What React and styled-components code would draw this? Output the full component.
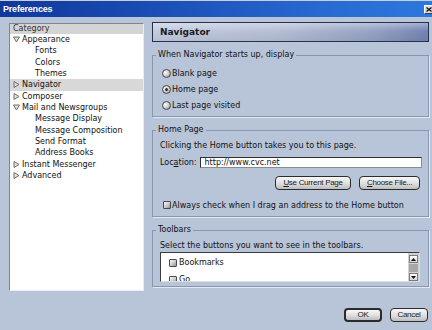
import React from "react";
import styled, { createGlobalStyle } from "styled-components";

const Global = createGlobalStyle`
  html, body { margin: 0; padding: 0; background: #b8c4d8; }
  body { font-family: "DejaVu Sans", Verdana, sans-serif; }
  * { box-sizing: border-box; }
`;

const Window = styled.div`
  width: 432px;
  height: 330px;
  background: #b8c4d8;
  display: flex;
  flex-direction: column;
  overflow: hidden;
  font-family: "DejaVu Sans", Verdana, sans-serif;
  font-size: 8px;
  color: #111;
`;

const TitleBar = styled.div`
  height: 17px;
  flex: none;
  border-top: 1px solid #c9cfdb;
  background: linear-gradient(to right, #10389a 0%, #1a4db5 35%, #276ad2 75%, #2c78de 100%);
  display: flex;
  align-items: center;
  justify-content: space-between;
  padding-left: 3px;
`;

const Title = styled.span`
  font-family: "Liberation Sans", Arial, sans-serif;
  font-weight: bold;
  font-size: 9px;
  letter-spacing: -0.2px;
  color: #fff;
`;

const CloseBox = styled.span`
  width: 10px;
  height: 9px;
  margin-right: -2px;
  background: #d8d8d8;
  border: 1px solid;
  border-color: #fff #404040 #404040 #fff;
  display: flex;
  align-items: center;
  justify-content: center;
`;

const Body = styled.div`
  flex: none;
  display: flex;
  gap: 8px;
  padding: 5px 3px 0 9px;
`;

const TreePanel = styled.div`
  width: 135px;
  height: 268px;
  flex: none;
  margin-top: 1px;
  background: #fff;
  border: 1px solid;
  border-color: #7d8597 #e9edf3 #e9edf3 #7d8597;
  overflow: hidden;
`;

const TreeHead = styled.div`
  height: 10px;
  line-height: 10px;
  background: #d4d4d4;
  color: #333;
  padding-left: 3px;
`;

const TreeRow = styled.div`
  height: 11.33px;
  display: flex;
  align-items: center;
  padding-left: ${(p) => (p.$depth ? 25 : 3)}px;
  background: ${(p) => (p.$selected ? "#d8d8d8" : "transparent")};
  white-space: nowrap;
  color: #111;
`;

const TwistyIcon = styled.svg`
  flex: none;
  margin-right: 2px;
  fill: #e2e2e2;
  stroke: #6e6e6e;
  stroke-width: 1;
`;

const Main = styled.div`
  width: 277px;
  flex: none;
  display: flex;
  flex-direction: column;
`;

const PanelHeader = styled.div`
  height: 20px;
  border: 1px solid #27304c;
  background: linear-gradient(to bottom, rgba(255, 255, 255, 0.35), rgba(255, 255, 255, 0) 45%, rgba(0, 0, 0, 0.06)),
    linear-gradient(to right, #c3cbde 0%, #b5bfd5 45%, #95a2c3 80%, #7384b2 100%);
  display: flex;
  align-items: center;
  padding-left: 7px;
  font-weight: bold;
  font-size: 9px;
  color: #1a1a1a;
`;

const Group = styled.fieldset`
  margin: 8px 0 0;
  padding: ${(p) => p.$pt}px 6px ${(p) => p.$pb}px 7px;
  border: 1px solid #8a96ad;
  box-shadow: 1px 1px 0 #e3e9f2;
  min-inline-size: 0;
`;

const Legend = styled.legend`
  padding: 0 2px;
  margin-left: -4px;
  line-height: 10px;
  font-size: 8px;
  color: #111;
`;

const OptionRow = styled.div`
  display: flex;
  align-items: center;
  height: ${(p) => p.$h}px;
  margin-top: ${(p) => p.$mt || 0}px;
  padding-left: ${(p) => p.$indent}px;
  gap: ${(p) => p.$gap}px;
  white-space: nowrap;
`;

const Radio = styled.span`
  width: 9px;
  height: 9px;
  flex: none;
  border-radius: 50%;
  border: 1px solid #4a4a4a;
  background: radial-gradient(circle at 35% 35%, #fff 0%, #d2d2d2 45%, #8a8a8a 100%);
  display: flex;
  align-items: center;
  justify-content: center;
  &::after {
    content: "";
    width: 3px;
    height: 3px;
    border-radius: 50%;
    background: #2e2e2e;
    display: ${(p) => (p.$checked ? "block" : "none")};
  }
`;

const Check = styled.span`
  width: 8px;
  height: 8px;
  flex: none;
  border: 1px solid #4a4a4a;
  border-radius: 1px;
  background: linear-gradient(135deg, #fbfbfb, #c4c4c4 60%, #8f8f8f);
`;

const Line = styled.div`
  height: 10px;
  line-height: 10px;
  white-space: nowrap;
`;

const LocationRow = styled.div`
  display: flex;
  align-items: center;
  height: 11px;
  margin-top: 6px;
  gap: 3px;
`;

const Label = styled.span`
  white-space: nowrap;
  u {
    text-decoration: underline;
  }
`;

const TextInput = styled.input`
  flex: 1;
  min-width: 0;
  height: 11px;
  border: 1px solid;
  border-color: #303030 #8c8c8c #8c8c8c #303030;
  background: #fff;
  font-family: "DejaVu Sans", Verdana, sans-serif;
  font-size: 8px;
  line-height: 9px;
  padding: 0 4px;
  color: #111;
  outline: none;
`;

const ButtonRow = styled.div`
  display: flex;
  justify-content: flex-end;
  gap: 8px;
  margin-top: 8px;
  padding-right: 2px;
`;

const Button = styled.button`
  height: 14px;
  width: ${(p) => p.$w}px;
  padding: 0;
  border: ${(p) => (p.$default ? 2 : 1)}px solid #2b2b2b;
  border-radius: 4px;
  background: linear-gradient(#f8f8f8, #dedede 55%, #bdbdbd);
  font-family: "Liberation Sans", Arial, sans-serif;
  font-size: 8px;
  letter-spacing: -0.3px;
  color: #1a1a1a;
  line-height: 1;
  display: flex;
  align-items: center;
  justify-content: center;
`;

const ListBox = styled.div`
  height: 30px;
  margin: 1px 2px 0 0;
  border: 1px solid;
  border-color: #3c3c3c #d9dee6 #d9dee6 #3c3c3c;
  background: #fff;
  display: flex;
  overflow: hidden;
`;

const ListItems = styled.div`
  flex: 1;
  padding-top: 1px;
  overflow: hidden;
`;

const ListItem = styled.div`
  height: 17px;
  display: flex;
  align-items: center;
  padding-left: 8px;
  gap: 2px;
`;

const ScrollBar = styled.div`
  width: 11px;
  flex: none;
  display: flex;
  flex-direction: column;
  background: #d0d0d0;
  padding: 2px 1px 0;
`;

const ScrollBtn = styled.div`
  height: 8px;
  flex: none;
  display: flex;
  align-items: center;
  justify-content: center;
  background: linear-gradient(#ffffff, #d6d6d6);
  border: 1px solid #7a7a7a;
`;

const Thumb = styled.div`
  flex: 1;
  background: #a8a8a8;
  margin: 1px 0;
`;

const Footer = styled.div`
  margin-top: auto;
  display: flex;
  justify-content: flex-end;
  gap: 8px;
  padding: 0 4px 8px 0;
`;

const Twisty = ({ open }) => (
  <TwistyIcon width="7" height="7" viewBox="0 0 7 7">
    {open ? <polygon points="0.5,1 6.5,1 3.5,6" /> : <polygon points="1,0.5 6,3.5 1,6.5" />}
  </TwistyIcon>
);

const tree = [
  { label: "Appearance", open: true },
  { label: "Fonts", depth: 1 },
  { label: "Colors", depth: 1 },
  { label: "Themes", depth: 1 },
  { label: "Navigator", open: false, selected: true },
  { label: "Composer", open: false },
  { label: "Mail and Newsgroups", open: true },
  { label: "Message Display", depth: 1 },
  { label: "Message Composition", depth: 1 },
  { label: "Send Format", depth: 1 },
  { label: "Address Books", depth: 1 },
  { label: "Instant Messenger", open: false },
  { label: "Advanced", open: false },
];

const Arrow = ({ up }) => (
  <svg width="5" height="3" viewBox="0 0 5 3">
    <polygon points={up ? "0,3 5,3 2.5,0" : "0,0 5,0 2.5,3"} fill="#111" />
  </svg>
);

export default function App() {
  return (
    <Window>
      <Global />
      <TitleBar>
        <Title>Preferences</Title>
        <CloseBox>
          <svg width="6" height="5" viewBox="0 0 6 5">
            <path d="M0.5 0.5 L5.5 4.5 M5.5 0.5 L0.5 4.5" stroke="#111" strokeWidth="1.2" />
          </svg>
        </CloseBox>
      </TitleBar>
      <Body>
        <TreePanel>
          <TreeHead>Category</TreeHead>
          {tree.map((r) => (
            <TreeRow key={r.label} $depth={r.depth} $selected={r.selected}>
              {!r.depth && <Twisty open={r.open} />}
              {r.label}
            </TreeRow>
          ))}
        </TreePanel>
        <Main>
          <PanelHeader>Navigator</PanelHeader>
          <Group $pt={5} $pb={3}>
            <Legend>When Navigator starts up, display</Legend>
            <OptionRow $h={16} $indent={2} $gap={1}>
              <Radio /> Blank page
            </OptionRow>
            <OptionRow $h={16} $indent={2} $gap={1}>
              <Radio $checked /> Home page
            </OptionRow>
            <OptionRow $h={16} $indent={2} $gap={1}>
              <Radio /> Last page visited
            </OptionRow>
          </Group>
          <Group $pt={6} $pb={6}>
            <Legend>Home Page</Legend>
            <Line>Clicking the Home button takes you to this page.</Line>
            <LocationRow>
              <Label>
                Loc<u>a</u>tion:
              </Label>
              <TextInput readOnly value="http://www.cvc.net" />
            </LocationRow>
            <ButtonRow>
              <Button $w={76}>
                <u>U</u>se Current Page
              </Button>
              <Button $w={61}>
                <u>C</u>hoose File...
              </Button>
            </ButtonRow>
            <OptionRow $h={10} $mt={10} $indent={3} $gap={1}>
              <Check /> Always check when I drag an address to the Home button
            </OptionRow>
          </Group>
          <Group $pt={6} $pb={4}>
            <Legend>Toolbars</Legend>
            <Line>Select the buttons you want to see in the toolbars.</Line>
            <ListBox>
              <ListItems>
                <ListItem>
                  <Check /> Bookmarks
                </ListItem>
                <ListItem>
                  <Check /> Go
                </ListItem>
              </ListItems>
              <ScrollBar>
                <ScrollBtn>
                  <Arrow up />
                </ScrollBtn>
                <Thumb />
                <ScrollBtn>
                  <Arrow />
                </ScrollBtn>
              </ScrollBar>
            </ListBox>
          </Group>
        </Main>
      </Body>
      <Footer>
        <Button $w={38} $default>
          OK
        </Button>
        <Button $w={38}>Cancel</Button>
      </Footer>
    </Window>
  );
}
